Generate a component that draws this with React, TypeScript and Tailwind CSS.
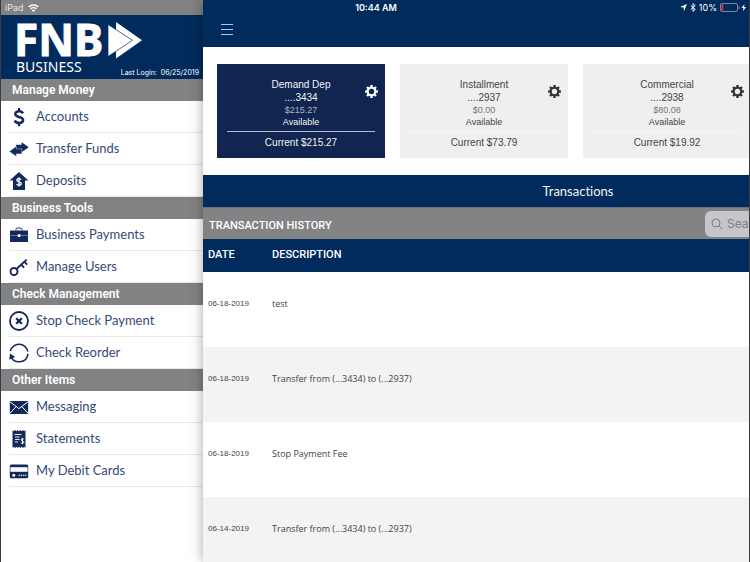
import { ReactNode } from "react";

interface MenuItem {
  label: string;
  icon: ReactNode;
}

interface MenuGroup {
  title: string;
  items: Array<MenuItem>;
}

interface Account {
  name: string;
  number: string;
  available: string;
  current: string;
  selected?: boolean;
}

interface Transaction {
  date: string;
  description: string;
}

interface IconProps {
  children: ReactNode;
}

const MenuIcon = ({ children }: IconProps) => (
  <svg
    viewBox="0 0 20 20"
    className="size-5 shrink-0 text-[#13295b]"
    fill="currentColor"
    aria-hidden="true"
  >
    {children}
  </svg>
);

const DollarIcon = () => (
  <MenuIcon>
    <path
      d="M14 6.4C13.3 4.9 11.9 4.2 10 4.2c-2.1 0-3.7 1-3.7 2.8 0 4.1 7.8 1.9 7.8 6.1 0 1.8-1.7 2.9-4 2.9-2.2 0-3.7-.9-4.4-2.6"
      fill="none"
      stroke="currentColor"
      strokeWidth="2.5"
    />
    <path d="M9 1h2.200v3.400H9zM9 15.800h2.200v3.400H9z" />
  </MenuIcon>
);

const TransferIcon = () => (
  <MenuIcon>
    <path d="M12.600 3.200 19.800 8.200l-7.200 5v-2.600H7V5.800h5.600z" />
    <path
      d="M7.400 7.200.2 12.400l7.200 5.200v-2.700h5.400V9.900H7.400z"
      stroke="#fff"
      strokeWidth=".4"
    />
  </MenuIcon>
);

const DepositIcon = () => (
  <MenuIcon>
    <path d="M10 1 19.400 9.600H16V19H4V9.600H.6z" />
    <path
      d="M12.200 8.800c-.4-.9-1.200-1.200-2.200-1.200-1.200 0-2.100.6-2.100 1.600 0 2.300 4.400 1.100 4.400 3.400 0 1.100-1 1.700-2.300 1.700-1.200 0-2-.5-2.400-1.400M10 6.200v9.400"
      fill="none"
      stroke="#fff"
      strokeWidth="1.300"
    />
  </MenuIcon>
);

const BriefcaseIcon = () => (
  <MenuIcon>
    <path
      d="M7 5.500V4.500Q7 3 8.500 3h3Q13 3 13 4.500v1"
      fill="none"
      stroke="currentColor"
      strokeWidth="1"
    />
    <path d="M1 5.500h18V17H1z" />
    <path d="M1 10.200h18v.7H1z" fill="#8d9ab8" />
    <path d="M8.800 9.200h2.600v2.800H8.800z" fill="#fff" />
  </MenuIcon>
);

const KeyIcon = () => (
  <MenuIcon>
    <g fill="none" stroke="currentColor" strokeWidth="1.900">
      <circle cx="5" cy="14.500" r="3.500" />
      <path d="M7.500 12 17.600 2.600M12.200 7.600l2.900 3M15.300 4.700l2.900 3" />
    </g>
  </MenuIcon>
);

const StopIcon = () => (
  <MenuIcon>
    <circle
      cx="10"
      cy="10"
      r="9"
      fill="none"
      stroke="currentColor"
      strokeWidth="1.800"
    />
    <path
      d="m7.200 7.200 5.600 5.600m0-5.600-5.600 5.600"
      stroke="currentColor"
      strokeWidth="2.300"
    />
  </MenuIcon>
);

const ReorderIcon = () => (
  <MenuIcon>
    <g fill="none" stroke="currentColor" strokeWidth="1.500">
      <path d="M1.300 8.200A9 9 0 0 1 18.900 8.500" />
      <path d="M19 10.800A9 9 0 0 1 2 13.800" />
    </g>
    <path d="M.2 16.800 1 10.600l5.200 3.400z" />
  </MenuIcon>
);

const MailIcon = () => (
  <MenuIcon>
    <path d="M.8 4h18.400v13H.8z" />
    <path
      d="m.8 4.600 9.200 7 9.200-7M.8 16.400l6.400-6.800M19.200 16.400l-6.400-6.800"
      fill="none"
      stroke="#fff"
      strokeWidth="1"
    />
  </MenuIcon>
);

const StatementIcon = () => (
  <MenuIcon>
    <path d="M3.500 1l1.300 1.200L6.100 1l1.300 1.200L8.700 1 10 2.200 11.300 1l1.300 1.200L13.900 1l1.300 1.200L16.500 1v18l-1.300-1.200-1.300 1.200-1.300-1.200-1.300 1.200L10 17.800 8.700 19l-1.300-1.200L6.100 19l-1.300-1.200L3.500 19z" />
    <g fill="none" stroke="#fff" strokeWidth=".9">
      <path d="M5.500 5.500h7M6 8h4.500M6 10.500h4.500M6 13h3" />
      <path d="M14.800 10.200c-.7-.9-2.700-.7-2.700.6 0 1.400 2.800 1 2.800 2.500 0 1.300-2.200 1.500-3 .5M13.500 8.800v6.400" />
    </g>
  </MenuIcon>
);

const CardIcon = () => (
  <MenuIcon>
    <rect x=".8" y="3.500" width="18.400" height="13.800" rx="1.500" />
    <path d="M1.400 6.200h17.200v4.600H1.400z" fill="#fff" />
    <circle cx="4.800" cy="14.200" r="1.500" fill="#fff" />
    <path
      d="M9.500 14.300h8"
      stroke="#fff"
      strokeWidth="1"
      strokeDasharray="1.600 .6"
    />
  </MenuIcon>
);

const GearIcon = () => (
  <svg
    viewBox="0 0 24 24"
    className="size-[13px]"
    fill="none"
    stroke="currentColor"
    aria-hidden="true"
  >
    <circle cx="12" cy="12" r="7" strokeWidth="4" />
    <path
      d="M12 .200V4M12 20v3.800M.200 12H4M20 12h3.800M3.700 3.700l2.700 2.700M17.600 17.600l2.700 2.700M3.700 20.300l2.700-2.700M17.600 6.400l2.700-2.700"
      strokeWidth="4.400"
    />
  </svg>
);

const menu: Array<MenuGroup> = [
  {
    title: "Manage Money",
    items: [
      { label: "Accounts", icon: <DollarIcon /> },
      { label: "Transfer Funds", icon: <TransferIcon /> },
      { label: "Deposits", icon: <DepositIcon /> },
    ],
  },
  {
    title: "Business Tools",
    items: [
      { label: "Business Payments", icon: <BriefcaseIcon /> },
      { label: "Manage Users", icon: <KeyIcon /> },
    ],
  },
  {
    title: "Check Management",
    items: [
      { label: "Stop Check Payment", icon: <StopIcon /> },
      { label: "Check Reorder", icon: <ReorderIcon /> },
    ],
  },
  {
    title: "Other Items",
    items: [
      { label: "Messaging", icon: <MailIcon /> },
      { label: "Statements", icon: <StatementIcon /> },
      { label: "My Debit Cards", icon: <CardIcon /> },
    ],
  },
];

const accounts: Array<Account> = [
  {
    name: "Demand Dep",
    number: "....3434",
    available: "$215.27",
    current: "$215.27",
    selected: true,
  },
  {
    name: "Installment",
    number: "....2937",
    available: "$0.00",
    current: "$73.79",
  },
  {
    name: "Commercial",
    number: "....2938",
    available: "$80.08",
    current: "$19.92",
  },
];

const transactions: Array<Transaction> = [
  { date: "06-18-2019", description: "test" },
  { date: "06-18-2019", description: "Transfer from (...3434) to (...2937)" },
  { date: "06-18-2019", description: "Stop Payment Fee" },
  { date: "06-14-2019", description: "Transfer from (...3434) to (...2937)" },
];

const StatusBar = () => (
  <div className="absolute inset-x-0 top-0 z-20 grid h-[15px] grid-cols-3 items-center pr-0.5 pl-1 font-['Inter',sans-serif] text-[9px] leading-3 text-white">
    <div className="flex items-center gap-1 text-gray-200">
      <span>iPad</span>
      <svg viewBox="0 0 20 15" className="h-2 w-[11px]" aria-hidden="true">
        <g fill="none" stroke="#fff" strokeWidth="2.600">
          <path d="M1 5.500a13 13 0 0 1 18 0" />
          <path d="M4.500 9.200a8 8 0 0 1 11 0" />
        </g>
        <path d="M10 15 6.800 11.700a4.600 4.600 0 0 1 6.400 0z" fill="#fff" />
      </svg>
    </div>
    <span className="text-center font-semibold">10:44 AM</span>
    <div className="flex items-center justify-end gap-[3px]">
      <svg viewBox="0 0 12 12" className="size-[7px]" aria-hidden="true">
        <path d="M12 0 6.800 12 6 6 0 5.200z" fill="#fff" />
      </svg>
      <svg viewBox="0 0 8 12" className="h-[9px] w-1.5" aria-hidden="true">
        <path
          d="M1 3.500 7 8.500 4 11.200V.8L7 3.500 1 8.500"
          fill="none"
          stroke="#fff"
          strokeWidth="1.300"
        />
      </svg>
      <span>10%</span>
      <svg viewBox="0 0 27 9" className="h-[9px] w-[27px]" aria-hidden="true">
        <rect
          x=".5"
          y=".5"
          width="17"
          height="8"
          rx="1.500"
          fill="none"
          stroke="#7788a4"
        />
        <path d="M1.500 1.500h1.800v6H1.500z" fill="#e8323c" />
        <path d="M18.500 3h1v3h-1z" fill="#7788a4" />
        <path d="M24.500 1 21.500 5h2L23 8.200 26 4h-2z" fill="#fff" />
      </svg>
    </div>
  </div>
);

const Logo = () => (
  <svg
    viewBox="0 0 128 56"
    className="h-14 w-32 shrink-0 overflow-visible"
    fill="#fff"
    role="img"
    aria-label="FNB Business"
  >
    <text
      x="-2"
      y="35"
      className="font-['Noto_Sans',sans-serif] text-[44px] font-bold"
      stroke="#fff"
      strokeWidth="1"
    >
      FNB
    </text>
    <path d="M100 1 126 19.300 100 37.600z" />
    <path
      d="M92 3.500 116.500 19.300 92 35.500z"
      stroke="#002b5c"
      strokeWidth=".7"
    />
    <text x="0" y="51" className="font-['Noto_Sans',sans-serif] text-sm">
      BUSINESS
    </text>
  </svg>
);

const Sidebar = () => (
  <aside className="w-[202px] shrink-0 bg-white">
    <div className="h-[15px] bg-[#818284]" />
    <div className="flex h-16 justify-between bg-[#002b5c] pt-1.5 pr-1 pl-[15px] text-white">
      <Logo />
      <span className="-ml-8 self-end font-['Inter',sans-serif] text-[7px] leading-3 whitespace-pre">
        Last Login:  06/25/2019
      </span>
    </div>
    <nav>
      {menu.map((group) => (
        <section key={group.title}>
          <h2 className="bg-[#818284] pl-[11px] font-['Roboto',sans-serif] text-xs leading-[22px] font-semibold text-white">
            {group.title}
          </h2>
          <ul className="pl-2">
            {group.items.map((it) => (
              <li key={it.label} className="border-b border-[#e9e9eb]">
                <a
                  href="#"
                  className="flex h-[31px] items-center gap-[7px] font-['Lato',sans-serif] text-[13px] text-[#344a78]"
                >
                  {it.icon}
                  {it.label}
                </a>
              </li>
            ))}
          </ul>
        </section>
      ))}
    </nav>
  </aside>
);

const AccountCard = ({
  name,
  number,
  available,
  current,
  selected,
}: Account) => {
  return (
    <article
      className={
        selected
          ? "relative w-[168px] bg-[#10254f] px-2.5 pt-3.5 pb-2 text-center text-gray-100"
          : "relative w-[168px] bg-[#efefef] px-2.5 pt-3.5 pb-2 text-center text-[#444]"
      }
    >
      <h3 className="text-[10px] leading-[13px]">{name}</h3>
      <p className="text-[10px] leading-[13px]">{number}</p>
      <p
        className={
          selected
            ? "text-[9px] leading-3 text-[#aab3c6]"
            : "text-[9px] leading-3 text-[#777]"
        }
      >
        {available}
      </p>
      <p className="text-[9px] leading-3">Available</p>
      <p
        className={
          selected
            ? "mt-[3px] border-t border-[#b4bccb] pt-1 text-[10px] leading-[14px]"
            : "mt-[3px] border-t border-[#f8f8f8] pt-1 text-[10px] leading-[14px]"
        }
      >
        Current {current}
      </p>
      <button
        type="button"
        aria-label={`${name} settings`}
        className={
          selected
            ? "absolute top-[21px] right-[7px] text-white"
            : "absolute top-[21px] right-[7px] text-[#333]"
        }
      >
        <GearIcon />
      </button>
    </article>
  );
};

const TransactionTable = () => (
  <table className="w-full table-fixed text-left">
    <thead className="bg-[#002b5c] font-['Roboto',sans-serif] text-[11px] text-white">
      <tr className="h-[33px]">
        <th scope="col" className="w-16 pl-[5px] font-medium">
          DATE
        </th>
        <th scope="col" className="pl-[5px] font-medium">
          DESCRIPTION
        </th>
      </tr>
    </thead>
    <tbody className="text-[#444]">
      {transactions.map((it, i) => (
        <tr
          key={i}
          className="h-[75px] bg-white align-top leading-4 even:bg-[#f3f3f3]"
        >
          <td className="pt-6 pl-[5px] text-[8px]">{it.date}</td>
          <td className="pt-6 pl-[5px] font-['Open_Sans',sans-serif] text-[9px]">
            {it.description}
          </td>
        </tr>
      ))}
    </tbody>
  </table>
);

const App = () => {
  return (
    <div className="relative flex h-screen overflow-hidden border-x border-[#3c3c40] bg-white">
      <StatusBar />
      <Sidebar />
      {/* the main panel keeps its full width and slides past the right edge */}
      <main className="z-10 min-w-0 flex-1 bg-white font-['Liberation_Sans',sans-serif] shadow-[0_0_12px_rgba(0,0,0,0.35)]">
        <div className="w-screen">
          <header className="flex h-[47px] items-end bg-[#002b5c] pb-3 pl-[18px]">
            <button type="button" aria-label="Menu">
              <svg
                viewBox="0 0 12 11"
                className="h-[11px] w-3"
                stroke="#b9c5d6"
                aria-hidden="true"
              >
                <path d="M0 .5h12M0 5.500h12M0 10.500h12" />
              </svg>
            </button>
          </header>
          <div className="flex gap-[15px] px-3.5 py-[17px]">
            {accounts.map((it) => (
              <AccountCard key={it.number} {...it} />
            ))}
          </div>
          <h1 className="bg-[#002b5c] text-center font-['Lato',sans-serif] text-[13px] leading-8 text-gray-100 [font-variant-ligatures:none]">
            Transactions
          </h1>
          <div className="flex h-8 items-center justify-between border-t border-[#6d7075] bg-[#828385] pr-2 pl-1.5">
            <h2 className="pt-1 font-['Roboto',sans-serif] text-[11px] leading-4 font-medium text-white">
              TRANSACTION HISTORY
            </h2>
            <label className="flex h-[26px] w-60 items-center gap-1 rounded-md bg-[#c6c5cb] px-1.5 text-[#7d7d82]">
              <svg
                viewBox="0 0 12 12"
                className="size-3 shrink-0"
                fill="none"
                stroke="currentColor"
                aria-hidden="true"
              >
                <circle cx="5" cy="5" r="4" />
                <path d="m8 8 3.500 3.500" />
              </svg>
              <input
                type="search"
                aria-label="Search transactions"
                placeholder="Search"
                className="w-full bg-transparent font-['Inter',sans-serif] text-xs placeholder:text-[#7d7d82]"
              />
            </label>
          </div>
          <TransactionTable />
        </div>
      </main>
    </div>
  );
};

export default App;
